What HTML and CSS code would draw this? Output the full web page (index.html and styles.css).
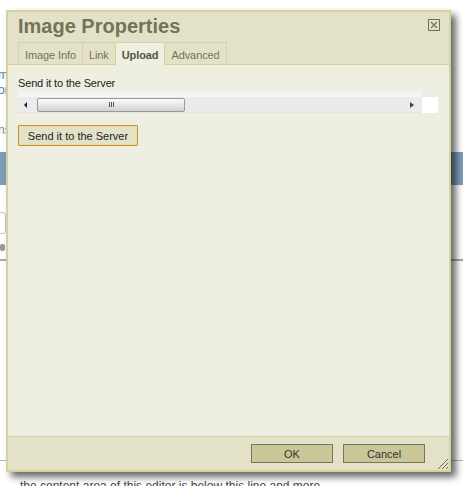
FILE: index.html
```html
<!DOCTYPE html>
<html lang="en">
<head>
    <meta charset="UTF-8">
    <title>Image Properties</title>
    <link rel="stylesheet" href="styles.css">
</head>
<body>
    <div class="page">
        <p class="page-line link first">mage options</p>
        <p class="page-line link">ond link</p>
        <p class="page-line note">nsert here</p>
        <div class="page-bar"></div>
        <div class="page-field"></div>
        <div class="page-icon"></div>
        <div class="page-rule"></div>
        <div class="page-rule lower"></div>
        <p class="page-foot">the content area of this editor is below this line and more</p>
    </div>

    <div class="dialog">
        <div class="dialog-head">
            <h1 class="dialog-title">Image Properties</h1>
            <div class="tabs">
                <span class="tab">Image Info</span>
                <span class="tab">Link</span>
                <span class="tab active">Upload</span>
                <span class="tab last">Advanced</span>
            </div>
        </div>
        <a class="close" title="Close">
            <svg viewBox="0 0 12 12" width="12" height="12">
                <rect x="0.5" y="0.5" width="11" height="11" fill="none" stroke="#6f6f52"/>
                <path d="M3 3 L9 9 M9 3 L3 9" stroke="#6f6f52" stroke-width="1.1"/>
            </svg>
        </a>

        <div class="dialog-body">
            <label class="field-label">Send it to the Server</label>
            <div class="upload-frame">
                <div class="frame-top"><span class="frame-corner"></span></div>
                <div class="scroll-row">
                    <div class="scrollbar">
                        <span class="arrow left"></span>
                        <span class="thumb"><span class="grip"></span></span>
                        <span class="arrow right"></span>
                    </div>
                    <span class="scroll-corner"></span>
                </div>
            </div>
            <button class="send-btn">Send it to the Server</button>
        </div>

        <div class="dialog-foot">
            <button class="foot-btn">OK</button>
            <button class="foot-btn">Cancel</button>
            <svg class="grip-corner" viewBox="0 0 12 12" width="12" height="12">
                <path d="M11 1 L1 11 M11 5 L5 11 M11 9 L9 11" stroke="#6f6f52" stroke-width="1"/>
            </svg>
        </div>
    </div>
</body>
</html>
```

FILE: styles.css
```css
body {
    margin: 0;
    background-color: #fff;
    font-family: "Liberation Sans", Arial, sans-serif;
    font-size: 11px;
    overflow: hidden;
}

/* page behind the dialog */
.page {
    height: 486px;
    padding-top: 68px;
    box-sizing: border-box;
}

.page-line {
    margin: 0 0 0 -2px;
    font-size: 12px;
    line-height: 15px;
    white-space: nowrap;
}

.page-line.link {
    color: #4d7fae;
}

.page-line.note {
    margin-top: 25px;
    color: #8a8a8a;
}

.page-bar {
    margin-top: 14px;
    height: 33px;
    background-color: #7c9db9;
}

.page-field {
    margin: 27px 0 0 -10px;
    width: 14px;
    height: 20px;
    border: 1px solid #c8c8c8;
    border-radius: 3px;
}

.page-icon {
    margin: 10px 0 0 0;
    width: 5px;
    height: 7px;
    background-color: #999;
    border-radius: 2px;
}

.page-rule {
    margin-top: 8px;
    height: 2px;
    background-color: #a9a9a9;
}

.page-rule.lower {
    margin-top: 199px;
    height: 1px;
    background-color: #b5b5b5;
}

.page-foot {
    margin: 18px 0 0 20px;
    color: #444;
    font-size: 12px;
    line-height: 14px;
    white-space: nowrap;
}

/* dialog */
.dialog {
    position: absolute;
    left: 6px;
    top: 10px;
    width: 445px;
    height: 462px;
    box-sizing: border-box;
    border: 2px solid #d4d29e;
    background-color: #efefe1;
    display: flex;
    flex-direction: column;
    box-shadow: 5px 5px 7px rgba(0, 0, 0, 0.6);
}

.dialog-head {
    background-color: #e3e2c8;
    border-bottom: 1px solid #d4d29e;
    padding: 2px 10px 0;
    height: 50px;
}

.dialog-title {
    margin: 0;
    font-size: 20px;
    line-height: 24px;
    font-weight: bold;
    color: #737357;
}

.tabs {
    display: flex;
    margin-top: 4px;
}

.tab {
    display: block;
    height: 20px;
    padding: 2px 6px 0;
    line-height: 20px;
    border-top: 1px solid #d4d29e;
    border-left: 1px solid #d4d29e;
    color: #737357;
    font-size: 11px;
    letter-spacing: -0.1px;
    white-space: nowrap;
}

.tab.last {
    border-right: 1px solid #d4d29e;
}

.tab.active {
    background-color: #efefe1;
    color: #555541;
    font-weight: bold;
    height: 21px;
}

.close {
    position: absolute;
    right: 9px;
    top: 7px;
    width: 12px;
    height: 12px;
}

.close svg {
    display: block;
}

.dialog-body {
    flex: 1;
    padding: 11px 11px 0 10px;
}

.field-label {
    display: block;
    color: #222;
    line-height: 14px;
    letter-spacing: -0.15px;
}

.upload-frame {
    width: 420px;
}

.frame-top {
    height: 7px;
    background: linear-gradient(#f0f0ee, #f7f7f5);
    display: flex;
    justify-content: flex-end;
}

.frame-corner {
    width: 16px;
    background-color: #ebebeb;
}

.scroll-row {
    display: flex;
    height: 16px;
}

.scrollbar {
    flex: 1;
    background-color: #ebebeb;
    display: flex;
    align-items: center;
    border-bottom: 1px solid #e4e4e0;
}

.arrow {
    width: 0;
    height: 0;
    border-top: 3px solid transparent;
    border-bottom: 3px solid transparent;
}

.arrow.left {
    margin-left: 6px;
    border-right: 3px solid #222;
}

.arrow.right {
    margin-left: auto;
    margin-right: 8px;
    border-left: 4px solid #444;
}

.thumb {
    margin-left: 10px;
    width: 148px;
    height: 14px;
    box-sizing: border-box;
    border: 1px solid #9a9a9a;
    border-radius: 2px;
    background: linear-gradient(#fcfcfc, #e6e6e6 50%, #d0d0d0);
    display: flex;
    align-items: center;
    justify-content: center;
}

.grip {
    width: 5px;
    height: 5px;
    background: repeating-linear-gradient(90deg, #555 0 1px, transparent 1px 2px);
}

.scroll-corner {
    width: 16px;
    background-color: #fff;
}

.send-btn {
    display: block;
    margin-top: 12px;
    width: 120px;
    height: 21px;
    padding: 0;
    border: 1px solid #c4922e;
    border-radius: 1px;
    background-color: #e3e2c7;
    color: #222;
    font-family: "Liberation Sans", Arial, sans-serif;
    font-size: 11px;
    box-shadow: inset 0 0 0 1px #efdcae;
}

.dialog-foot {
    height: 34px;
    box-sizing: border-box;
    border-top: 1px solid #d4d29e;
    background-color: #e3e2c8;
    display: flex;
    justify-content: flex-end;
    align-items: flex-start;
    gap: 10px;
    padding: 7px 24px 0 0;
    position: relative;
}

.foot-btn {
    width: 82px;
    height: 19px;
    padding: 0;
    border: 1px solid #76765a;
    background-color: #c9c797;
    color: #333;
    font-family: "Liberation Sans", Arial, sans-serif;
    font-size: 11px;
}

.grip-corner {
    position: absolute;
    right: 0;
    bottom: 0;
}
```
